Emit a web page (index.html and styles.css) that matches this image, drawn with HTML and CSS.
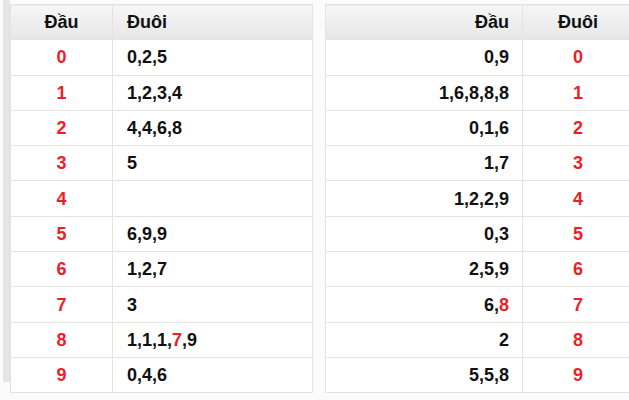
FILE: index.html
```html
<!DOCTYPE html>
<html>
<head>
<meta charset="utf-8">
<link rel="stylesheet" href="styles.css">
</head>
<body>
<div class="page">
  <div class="strip"></div>
  <table class="tbl left">
    <thead><tr><th class="c1">Đầu</th><th class="c2">Đuôi</th></tr></thead>
    <tbody>
      <tr><td class="c1 red">0</td><td class="c2">0,2,5</td></tr>
      <tr><td class="c1 red">1</td><td class="c2">1,2,3,4</td></tr>
      <tr><td class="c1 red">2</td><td class="c2">4,4,6,8</td></tr>
      <tr><td class="c1 red">3</td><td class="c2">5</td></tr>
      <tr><td class="c1 red">4</td><td class="c2"></td></tr>
      <tr><td class="c1 red">5</td><td class="c2">6,9,9</td></tr>
      <tr><td class="c1 red">6</td><td class="c2">1,2,7</td></tr>
      <tr><td class="c1 red">7</td><td class="c2">3</td></tr>
      <tr><td class="c1 red">8</td><td class="c2">1,1,1,<span class="red">7</span>,9</td></tr>
      <tr><td class="c1 red">9</td><td class="c2">0,4,6</td></tr>
    </tbody>
  </table>
  <table class="tbl right">
    <thead><tr><th class="r1">Đầu</th><th class="r2">Đuôi</th></tr></thead>
    <tbody>
      <tr><td class="r1">0,9</td><td class="r2 red">0</td></tr>
      <tr><td class="r1">1,6,8,8,8</td><td class="r2 red">1</td></tr>
      <tr><td class="r1">0,1,6</td><td class="r2 red">2</td></tr>
      <tr><td class="r1">1,7</td><td class="r2 red">3</td></tr>
      <tr><td class="r1">1,2,2,9</td><td class="r2 red">4</td></tr>
      <tr><td class="r1">0,3</td><td class="r2 red">5</td></tr>
      <tr><td class="r1">2,5,9</td><td class="r2 red">6</td></tr>
      <tr><td class="r1">6,<span class="red">8</span></td><td class="r2 red">7</td></tr>
      <tr><td class="r1">2</td><td class="r2 red">8</td></tr>
      <tr><td class="r1">5,5,8</td><td class="r2 red">9</td></tr>
    </tbody>
  </table>
</div>
</body>
</html>
```
FILE: styles.css
```css
html, body {
  margin: 0;
  padding: 0;
  background: #ffffff;
  overflow: hidden;
}
.page {
  display: flex;
  align-items: flex-start;
  width: 629px;
  height: 400px;
  overflow: hidden;
  background: #fbfbfb;
  font-family: "Liberation Sans", Arial, sans-serif;
}
.strip {
  flex: none;
  width: 7px;
  height: 382px;
  margin-left: 3px;
  background: #e4e4e4;
}
.tbl {
  flex: none;
  border-collapse: collapse;
  table-layout: fixed;
  margin-top: 4px;
  background: #ffffff;
}
.tbl th, .tbl td {
  border: 1px solid #e6e2dd;
  height: 34.3px;
  padding: 0;
  font-size: 18px;
  font-weight: bold;
  color: #111111;
  line-height: 20px;
}
.tbl th {
  background: linear-gradient(#f6f6f6, #e7e7e7);
}
.left {
  width: 303px;
}
.left .c1 { width: 101px; text-align: center; }
.left .c2 { text-align: left; padding-left: 14px; }
.right {
  width: 306px;
  margin-left: 12px;
}
.right .r1 { width: 183px; text-align: right; padding-right: 13px; }
.right .r2 { width: 110px; text-align: center; }
.red { color: #ec1f27 !important; }
```
